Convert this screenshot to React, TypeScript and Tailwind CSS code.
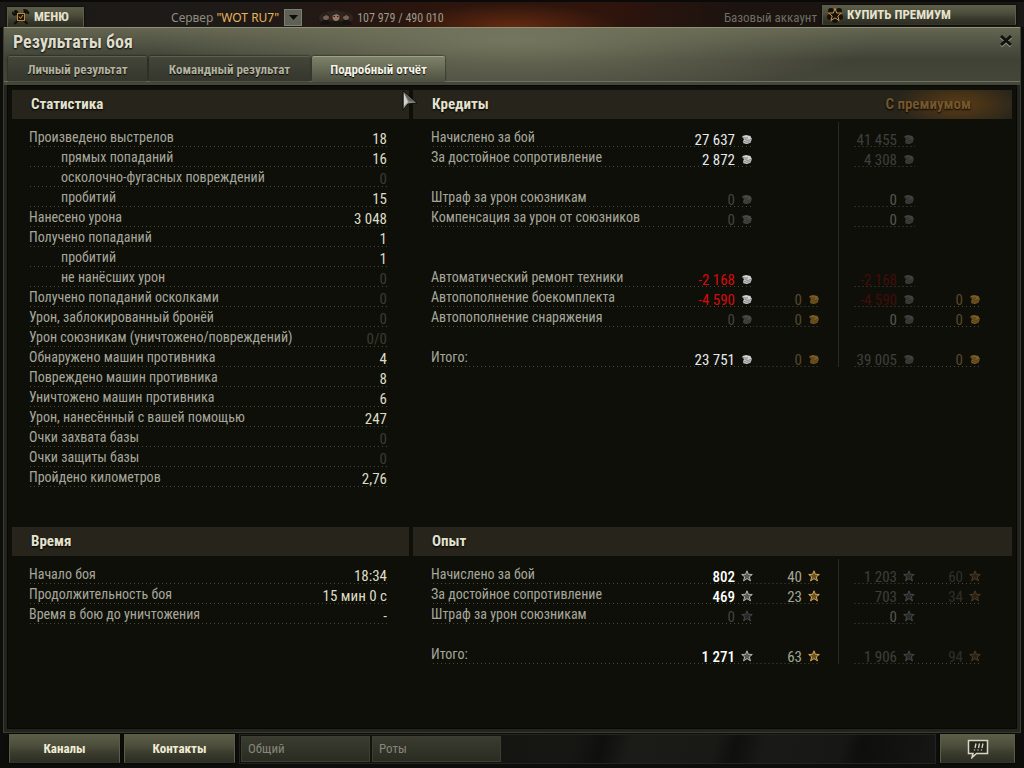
import { useState, type ReactNode } from "react";
import clsx from "clsx";

type Kind = "credit" | "gold" | "xp" | "freeXp";
type Amount = { value: string; tone: string; icon: Kind; iconTone: string };
type MoneyRow = {
  label: string;
  base: Amount;
  extra?: Amount;
  premium: Amount;
  premiumExtra?: Amount;
} | null;

const DOTS = "bg-[linear-gradient(to_right,#4a4a36_1px,transparent_1px)] bg-[length:4px_1px] bg-bottom bg-repeat-x";
const PLATE =
  "border border-[#5b5d47] border-b-[#34352a] bg-[linear-gradient(to_bottom,#5b5d48,#4c4e3c_40%,#3b3c2e_65%,#2d2e24)] shadow-[0_0_2px_#000]";

const STATS = [
  { label: "Произведено выстрелов", value: "18" },
  { label: "прямых попаданий", value: "16", sub: true },
  { label: "осколочно-фугасных повреждений", value: "0", sub: true },
  { label: "пробитий", value: "15", sub: true },
  { label: "Нанесено урона", value: "3 048" },
  { label: "Получено попаданий", value: "1" },
  { label: "пробитий", value: "1", sub: true },
  { label: "не нанёсших урон", value: "0", sub: true },
  { label: "Получено попаданий осколками", value: "0" },
  { label: "Урон, заблокированный бронёй", value: "0" },
  { label: "Урон союзникам (уничтожено/повреждений)", value: "0/0" },
  { label: "Обнаружено машин противника", value: "4" },
  { label: "Повреждено машин противника", value: "8" },
  { label: "Уничтожено машин противника", value: "6" },
  { label: "Урон, нанесённый с вашей помощью", value: "247" },
  { label: "Очки захвата базы", value: "0" },
  { label: "Очки защиты базы", value: "0" },
  { label: "Пройдено километров", value: "2,76" },
];

const TIMES = [
  { label: "Начало боя", value: "18:34" },
  { label: "Продолжительность боя", value: "15 мин 0 с" },
  { label: "Время в бою до уничтожения", value: "-" },
];

const credit = (value: string, tone = "text-[#e8eaea]"): Amount => ({
  value,
  tone: value === "0" ? "text-[#44453f]" : tone,
  icon: "credit",
  iconTone: value === "0" ? "text-[#4a4b48]" : "text-[#d0d3d3]",
});
const dimCredit = (value: string, tone = "text-[#3e3f3a]"): Amount => ({
  value,
  tone: value === "0" ? "text-[#565750]" : tone,
  icon: "credit",
  iconTone: "text-[#41423f]",
});
const gold = (): Amount => ({ value: "0", tone: "text-[#59472a]", icon: "gold", iconTone: "text-[#7d5c23]" });
const xp = (value: string): Amount => ({
  value,
  tone: value === "0" ? "text-[#44453f]" : "text-white font-medium",
  icon: "xp",
  iconTone: value === "0" ? "text-[#45464a]" : "text-[#b4b5b2]",
});
const freeXp = (value: string): Amount => ({ value, tone: "text-[#a3a491]", icon: "freeXp", iconTone: "text-[#d8a552]" });
const dimXp = (value: string): Amount => ({
  value,
  tone: value === "0" ? "text-[#565750]" : "text-[#3e3f3a]",
  icon: "xp",
  iconTone: "text-[#454649]",
});
const dimFreeXp = (value: string): Amount => ({ value, tone: "text-[#2e2f29]", icon: "freeXp", iconTone: "text-[#4c3a25]" });

const CREDITS: MoneyRow[] = [
  { label: "Начислено за бой", base: credit("27 637"), premium: dimCredit("41 455") },
  { label: "За достойное сопротивление", base: credit("2 872"), premium: dimCredit("4 308") },
  null,
  { label: "Штраф за урон союзникам", base: credit("0"), premium: dimCredit("0") },
  { label: "Компенсация за урон от союзников", base: credit("0"), premium: dimCredit("0") },
  null,
  null,
  {
    label: "Автоматический ремонт техники",
    base: credit("-2 168", "text-[#d80a0a]"),
    premium: dimCredit("-2 168", "text-[#430c09]"),
  },
  {
    label: "Автопополнение боекомплекта",
    base: credit("-4 590", "text-[#d80a0a]"),
    extra: gold(),
    premium: dimCredit("-4 590", "text-[#430c09]"),
    premiumExtra: gold(),
  },
  { label: "Автопополнение снаряжения", base: credit("0"), extra: gold(), premium: dimCredit("0"), premiumExtra: gold() },
  null,
  { label: "Итого:", base: credit("23 751"), extra: gold(), premium: dimCredit("39 005"), premiumExtra: gold() },
];

const EXPERIENCE: MoneyRow[] = [
  { label: "Начислено за бой", base: xp("802"), extra: freeXp("40"), premium: dimXp("1 203"), premiumExtra: dimFreeXp("60") },
  { label: "За достойное сопротивление", base: xp("469"), extra: freeXp("23"), premium: dimXp("703"), premiumExtra: dimFreeXp("34") },
  { label: "Штраф за урон союзникам", base: xp("0"), premium: dimXp("0") },
  null,
  { label: "Итого:", base: xp("1 271"), extra: freeXp("63"), premium: dimXp("1 906"), premiumExtra: dimFreeXp("94") },
];

function AmountIcon({ kind, tone }: { kind: Kind; tone: string }) {
  if (kind === "credit" || kind === "gold") {
    return (
      <svg width="10" height="9" viewBox="0 0 10 9" className={tone} aria-hidden>
        <path d="M.5 1 4 0 8.500 1 9 2.500 9.800 3.500 9.300 5.800 8.500 7.800 5 9 1.500 8.200 1 6.500 2 4 .500 2.800z" fill="currentColor" />
        <path d="M1 2.500 4 3.200 6 2.800M2.500 4.600 6 5.400 9 4.600M1.500 6.400 5 7.300 8.500 6.600" fill="none" stroke="#0f0f0a" strokeWidth=".6" opacity=".7" />
      </svg>
    );
  }
  return (
    <svg width="12" height="12" viewBox="0 0 12 12" className={tone} aria-hidden>
      <path
        d="M6 .8 7.400 4.300 11.300 4.500 8.300 6.900 9.500 10.900 6 8.600 2.500 10.900 3.700 6.900 .7 4.500 4.600 4.300z"
        fill="currentColor"
        fillOpacity=".45"
        stroke="currentColor"
      />
    </svg>
  );
}

function AmountCell({ amount }: { amount?: Amount }) {
  if (!amount) return <td />;
  return (
    <td className={clsx("p-0", DOTS)}>
      <div className="flex h-5 justify-end gap-[6px]">
        <span className={clsx("whitespace-nowrap text-[15px] leading-[26px]", amount.tone)}>{amount.value}</span>
        <span className="flex h-6 w-3 items-center justify-center">
          <AmountIcon kind={amount.icon} tone={amount.iconTone} />
        </span>
      </div>
    </td>
  );
}

function MoneyTable({ rows }: { rows: MoneyRow[] }) {
  return (
    <table className="ml-[18px] mt-[3px] w-[550px] table-fixed border-collapse">
      <colgroup>
        <col className="w-[224px]" />
        <col className="w-[98px]" />
        <col className="w-[67px]" />
        <col className="w-[18px]" />
        <col className="w-[16px]" />
        <col className="w-[61px]" />
        <col className="w-[66px]" />
      </colgroup>
      <tbody>
        <tr className="h-[5px]">
          <td colSpan={4} />
          <td className="border-l border-[#2a2a22]" />
          <td colSpan={2} />
        </tr>
        {rows.map((row, i) =>
          row ? (
            <tr key={i} className="h-5">
              <th scope="row" className={clsx("whitespace-nowrap p-0 text-left text-sm font-normal leading-5 text-[#a6a79a]", DOTS)}>
                {row.label}
              </th>
              <AmountCell amount={row.base} />
              <AmountCell amount={row.extra} />
              <td />
              <td className="border-l border-[#2a2a22]" />
              <AmountCell amount={row.premium} />
              <AmountCell amount={row.premiumExtra} />
            </tr>
          ) : (
            <tr key={i} className="h-5">
              <td colSpan={4} />
              <td className="border-l border-[#2a2a22]" />
              <td colSpan={2} />
            </tr>
          )
        )}
      </tbody>
    </table>
  );
}

function StatTable({ rows }: { rows: { label: string; value: string; sub?: boolean }[] }) {
  return (
    <table className="ml-[17px] mt-2 w-[358px] border-collapse">
      <tbody>
        {rows.map((row, i) => (
          <tr key={i} className={clsx("h-5", DOTS)}>
            <th
              scope="row"
              className={clsx("whitespace-nowrap p-0 text-left text-sm font-normal leading-5 text-[#a6a79a]", row.sub && "pl-8")}
            >
              {row.label}
            </th>
            <td className="p-0">
              <div
                className={clsx(
                  "h-5 text-right text-[15px] leading-6",
                  row.value === "0" || row.value === "0/0" ? "text-[#3b3c31]" : "text-[#dcdcc4]"
                )}
              >
                {row.value}
              </div>
            </td>
          </tr>
        ))}
      </tbody>
    </table>
  );
}

function SectionTitle({ children, className }: { children: ReactNode; className?: string }) {
  return (
    <div
      className={clsx(
        "flex h-[29px] items-center justify-between bg-[#26241b] pl-[19px] text-[15px] font-bold text-[#e4e2cf] [text-shadow:0_1px_2px_#000]",
        className
      )}
    >
      {children}
    </div>
  );
}

function TopBar() {
  return (
    <header className="flex h-[27px] items-end border-t-2 border-[#0a0a09] bg-[radial-gradient(ellipse_110px_24px_at_50%_100%,#652a10,transparent),linear-gradient(to_right,#1b1a17,#1f1a18_25%,#2b150d_42%,#2e140c_60%,#1b1310_72%,#1a1816)] pl-[7px] pr-2">
      <button type="button" className={clsx("flex h-5 w-[77px] items-center gap-1 pl-1 text-[13px] font-bold text-[#e6e3cf]", PLATE)}>
        <svg width="18" height="16" viewBox="0 0 18 16" aria-hidden>
          <path d="M2.500 1.500 15.500 15M15 1.500 2.500 15" stroke="#12120d" strokeWidth="2.500" />
          <path d="M0 2l2 2 2-3 2 1-1 4-3 1-2-2zM11 0l4 .5 2.500 3-1 2L12 3z" fill="#12120d" />
          <rect x="5.500" y="4.500" width="7" height="7" fill="#1a140b" stroke="#c48534" />
          <path d="M7 7.500 8.500 9.500 11 6" fill="none" stroke="#d9993f" />
        </svg>
        МЕНЮ
      </button>
      <div className="ml-[87px] flex h-[19px] items-center gap-[5px] font-['Noto_Sans',sans-serif] text-xs text-[#8f8d80]">
        <span>
          Сервер <span className="text-[#e8b45c]">"WOT RU7"</span>
        </span>
        <button type="button" aria-label="Выбрать сервер" className="flex h-[17px] w-[18px] items-center justify-center border border-[#7d7e74] bg-[#5f6056]">
          <svg width="9" height="5" viewBox="0 0 9 5" aria-hidden>
            <path d="M0 0h9L4.500 5z" fill="#0c0c08" />
          </svg>
        </button>
      </div>
      <div className="ml-[17px] flex h-[18px] items-center gap-1 text-xs text-[#9c998c]">
        <svg width="34" height="18" viewBox="0 0 34 18" aria-hidden>
          <ellipse cx="17" cy="9" rx="17" ry="7" fill="#77706a" opacity=".15" />
          <path d="M1 16q1-5 6-5t6 5zM21 16q1-5 6-5t6 5z" fill="#141311" />
          <circle cx="7" cy="8" r="3" fill="#79604f" />
          <circle cx="27" cy="8" r="3" fill="#79604f" />
          <path d="M3.500 8q0-4 3.500-4t3.500 4l-3-2zM23.500 8q0-4 3.500-4t3.500 4l-3-2z" fill="#25221e" />
          <path d="M9 17q1-6 8-6t8 6z" fill="#191714" />
          <ellipse cx="17" cy="7.500" rx="3.500" ry="4.500" fill="#9b7560" />
          <path d="M12.500 7q0-6 4.500-6t4.500 6l-4-2z" fill="#2a2622" />
          <path d="M14.500 7.500h1.500M18 7.500h1.500" stroke="#221a15" />
        </svg>
        107 979 / 490 010
      </div>
      <div className="ml-auto text-[13px] text-[#706d60]">Базовый аккаунт</div>
      <button type="button" className={clsx("mb-[2px] ml-[5px] flex h-5 w-[194px] items-center gap-1 pl-1 text-[13px] font-bold text-[#e6e3cf]", PLATE)}>
        <svg width="16" height="16" viewBox="0 0 16 16" aria-hidden>
          <g fill="#12110b">
            <circle cx="4" cy="4" r="3" />
            <circle cx="12" cy="4" r="3" />
            <circle cx="3" cy="10" r="3" />
            <circle cx="13" cy="10" r="3" />
            <circle cx="8" cy="13" r="3" />
          </g>
          <path d="M8 1.500 9.700 6h4.800l-3.700 3 1.300 4.500L8 10.900l-4.100 2.600L5.200 9 1.500 6h4.800z" fill="#15120b" stroke="#cf9445" />
        </svg>
        КУПИТЬ ПРЕМИУМ
      </button>
    </header>
  );
}

const TABS = [
  { label: "Личный результат", width: "w-[139px]" },
  { label: "Командный результат", width: "w-[161px]" },
  { label: "Подробный отчёт", width: "w-[133px]" },
];

function App() {
  const [tab, setTab] = useState(2);

  return (
    <div className="relative flex min-h-screen flex-col overflow-hidden bg-[#0d0d0b] font-['Roboto_Condensed','Liberation_Sans_Narrow','Liberation_Sans',sans-serif]">
      <TopBar />

      <main className="mx-[3px] flex flex-1 flex-col border border-t-0 border-[#3a3b31] bg-[#24241e] px-[3px] pb-[3px]">
        <div className="-mx-[3px] border-t border-[#8f8f74] bg-[radial-gradient(ellipse_360px_60px_at_50%_20%,#74765e,transparent),linear-gradient(to_bottom,#646651,#4c4e40_35%,#414236_55%,#46473b)] px-1">
          <div className="flex h-7 items-center justify-between pl-[5px] pr-[2px]">
            <h1 className="text-lg font-bold text-[#dedccb] [text-shadow:0_1px_2px_#000]">Результаты боя</h1>
            <button type="button" aria-label="Закрыть" className="flex h-4 w-4 items-start justify-center">
              <svg width="14" height="14" viewBox="0 0 14 14" aria-hidden>
                <path d="M2 3l10 9M12 3 2 12" stroke="#8d8f7d" strokeWidth="3.500" />
                <path d="M2 2l10 9M12 2 2 11" stroke="#11110d" strokeWidth="3" />
              </svg>
            </button>
          </div>
          <div role="tablist" className="flex gap-[2px]">
            {TABS.map((t, i) => (
              <button
                key={t.label}
                type="button"
                role="tab"
                aria-selected={i === tab}
                onClick={() => setTab(i)}
                className={clsx(
                  "h-[25px] rounded-t-xs border-t pt-[2px] text-[13px] font-bold [text-shadow:0_1px_1px_#000] shadow-[0_0_2px_#000]",
                  t.width,
                  i === tab
                    ? "border-[#a0a287] bg-linear-to-b from-[#7f8269] to-[#505242] text-[#f4f3e6]"
                    : "border-[#5e604e] bg-linear-to-b from-[#45463a] to-[#35362c] text-[#b3b29f]"
                )}
              >
                {t.label}
              </button>
            ))}
          </div>
          <div className="-mx-1 h-1 border-t border-[#6e7060] bg-[#46473b]" />
        </div>

        <div className="grid flex-1 grid-cols-[397px_1fr] grid-rows-[auto_1fr] gap-x-1 border border-[#070705] bg-[#0f0f0a] p-1">
          <section className="pb-10">
            <SectionTitle>Статистика</SectionTitle>
            <StatTable rows={STATS} />
          </section>
          <section>
            <SectionTitle className="bg-[radial-gradient(ellipse_65px_26px_at_91%_50%,#5c3c15,transparent)] pr-[41px]">
              <span>Кредиты</span>
              <span className="text-[#76562c]">С премиумом</span>
            </SectionTitle>
            <MoneyTable rows={CREDITS} />
          </section>
          <section>
            <SectionTitle>Время</SectionTitle>
            <StatTable rows={TIMES} />
          </section>
          <section>
            <SectionTitle>Опыт</SectionTitle>
            <MoneyTable rows={EXPERIENCE} />
          </section>
        </div>
      </main>

      <footer className="flex h-[35px] items-start gap-1 px-[9px] pt-px">
        <button type="button" className={clsx("h-[29px] w-[111px] text-[13px] font-bold text-[#f0ecd4]", PLATE)}>
          Каналы
        </button>
        <button type="button" className={clsx("h-[29px] w-[111px] text-[13px] font-bold text-[#f0ecd4]", PLATE)}>
          Контакты
        </button>
        <div className="flex h-[30px] flex-1 gap-[2px] border border-[#24241f] bg-[linear-gradient(105deg,#10100d_0%,#161613_48%,#0f0f0d_52%,#1b1b18_56%,#191916_68%,#0f0f0d_71%,#191917_75%,#171715_86%,#0e0e0c_89%,#161614)] p-px">
          {["Общий", "Роты"].map((name) => (
            <button
              key={name}
              type="button"
              className="h-[26px] w-[129px] border border-[#3d3e31] bg-linear-to-b from-[#3b3c30] to-[#2a2b22] pl-[6px] text-left text-[13px] text-[#87867a]"
            >
              {name}
            </button>
          ))}
        </div>
        <button type="button" aria-label="Уведомления" className={clsx("flex h-[29px] w-[75px] items-center justify-center", PLATE)}>
          <svg width="22" height="20" viewBox="0 0 22 20" aria-hidden>
            <path d="M1.500 1.500h19v13h-11L5 18.500l1-4H1.500z" fill="#25261d" stroke="#d9d6c3" strokeWidth="1.500" />
            <path d="M9 4.500 8 9M12.500 4.500 11.500 9M16 4.500 15 9M7.600 10.500l-.2 1M11.100 10.500l-.2 1M14.600 10.500l-.2 1" stroke="#d9d6c3" strokeWidth="1.300" />
          </svg>
        </button>
      </footer>

      <svg className="pointer-events-none absolute left-[402px] top-[90px]" width="16" height="22" viewBox="0 0 16 22" aria-hidden>
        <path d="M1 1v19l5-6 9-1z" fill="#8a8a84" stroke="#0c0c0a" />
        <path d="M2 3v13l4-4z" fill="#d3d3cd" />
        <path d="M2 3l5 8 6 1z" fill="#5f5f5a" />
      </svg>
    </div>
  );
}

export default App;
